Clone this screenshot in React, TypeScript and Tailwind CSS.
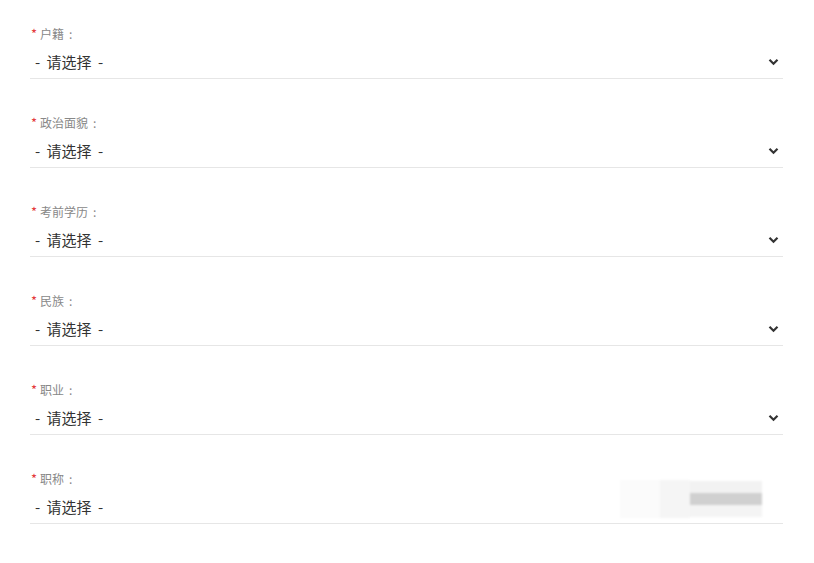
import React from "react";

const rows = [
  { label: "户籍", arrow: true },
  { label: "政治面貌", arrow: true },
  { label: "考前学历", arrow: true },
  { label: "民族", arrow: true },
  { label: "职业", arrow: true },
  { label: "职称", arrow: false },
];

function Chevron() {
  return (
    <svg width="11" height="8" viewBox="0 0 11 8" className="block">
      <path d="M1.5 1.8 L5.5 5.8 L9.5 1.8" fill="none" stroke="#333" strokeWidth="2.2" />
    </svg>
  );
}

export default function App() {
  return (
    <div
      className="w-[814px] h-[563px] bg-white pt-[26px] px-[30px] relative overflow-hidden"
      style={{ fontFamily: '"Microsoft YaHei", "Noto Sans CJK SC", "Noto Sans", sans-serif' }}
    >
      <div className="w-[753px] flex flex-col gap-[36px]">
        {rows.map((r) => (
          <div key={r.label} className="flex flex-col">
            <div className="h-[16px] flex items-center text-[12px] leading-[16px] text-[#888]">
              <span className="text-[#e4393c] text-[13px] ml-[1px] mr-[3px]">*</span>
              <span>{r.label}</span>
              <span className="ml-[5px]">:</span>
            </div>
            <div className="mt-[4px] h-[33px] border-b border-[#e6e6e6] flex items-center justify-between pl-[5px] pr-[4px]">
              <span className="text-[15px] text-[#333] leading-[20px] [word-spacing:3px]">- 请选择 -</span>
              {r.arrow && <Chevron />}
            </div>
          </div>
        ))}
      </div>
      <div className="absolute left-[620px] top-[478px] w-[170px] h-[42px] flex items-center blur-[1px]">
        <div className="w-[40px] h-[38px] bg-[#fbfbfb]" />
        <div className="w-[30px] h-[38px] bg-[#f5f5f5]" />
        <div className="flex flex-col w-[72px] h-[36px]">
          <div className="h-[12px] bg-[#f2f2f2]" />
          <div className="h-[12px] bg-[#d0d0d0]" />
          <div className="h-[12px] bg-[#f4f4f4]" />
        </div>
      </div>
    </div>
  );
}
